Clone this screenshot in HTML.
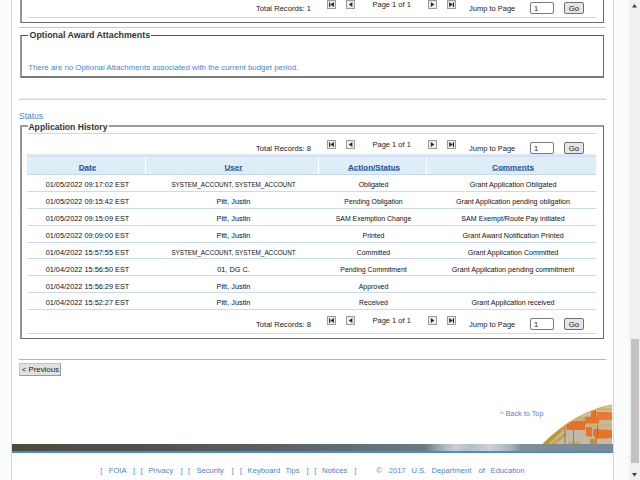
<!DOCTYPE html><html><head><meta charset="utf-8"><style>
html,body{margin:0;padding:0;}
body{width:640px;height:480px;overflow:hidden;position:relative;background:repeating-linear-gradient(-45deg, #ffffff 0px, #ffffff 1.6px, #f4f9f9 1.7px, #f4f9f9 2.83px);font-family:"Liberation Sans", sans-serif;}
.t{position:absolute;white-space:pre;}
.b{position:absolute;box-sizing:border-box;}
</style></head><body>
<div class="b" style="left:11px;top:0px;width:603px;height:480px;background:#fff;border-left:1px solid #c8dcf1;border-right:1px solid #c8dcf1;"></div>
<div class="b" style="left:629px;top:0px;width:11px;height:480px;background:#f0f0f0;"></div>
<div class="b" style="left:631px;top:339px;width:8px;height:124px;background:#c2c2c2;"></div>
<svg style="position:absolute;left:629px;top:0" width="11" height="480"><path d="M3 7.5 L5.5 4 L8 7.5Z" fill="#404040"/><path d="M3 473 L5.5 476.5 L8 473Z" fill="#404040"/></svg>
<div class="b" style="left:20px;top:-60px;width:584px;height:83px;border-left:2px solid #969696;border-right:1px solid #6a6a6a;border-bottom:1px solid #6a6a6a;"></div>
<div class="b" style="left:28px;top:17px;width:569px;height:1px;background:#c9dbf0;"></div>
<div class="t" style="left:256px;top:3.81px;font-size:7.6px;line-height:9.12px;color:#222;">Total Records: 1</div>
<svg style="position:absolute;left:327px;top:0px" width="9" height="9"><rect x="0.5" y="0.5" width="8" height="8" fill="#f6f6f6" stroke="#9c9c9c" stroke-width="1"/><rect x="1.5" y="1.5" width="6" height="6" fill="none" stroke="#e2e2e2" stroke-width="0.6"/><rect x="2.1" y="2.3" width="1.2" height="4.6" fill="#252a25"/><path d="M6.9 2.1 L3.3 4.6 L6.9 7.1Z" fill="#252a25"/></svg>
<svg style="position:absolute;left:346px;top:0px" width="9" height="9"><rect x="0.5" y="0.5" width="8" height="8" fill="#f6f6f6" stroke="#9c9c9c" stroke-width="1"/><rect x="1.5" y="1.5" width="6" height="6" fill="none" stroke="#e2e2e2" stroke-width="0.6"/><path d="M6.4 2.1 L2.8 4.6 L6.4 7.1Z" fill="#252a25"/></svg>
<svg style="position:absolute;left:428px;top:0px" width="9" height="9"><rect x="0.5" y="0.5" width="8" height="8" fill="#f6f6f6" stroke="#9c9c9c" stroke-width="1"/><rect x="1.5" y="1.5" width="6" height="6" fill="none" stroke="#e2e2e2" stroke-width="0.6"/><path d="M2.8 2.1 L6.4 4.6 L2.8 7.1Z" fill="#252a25"/></svg>
<svg style="position:absolute;left:447px;top:0px" width="9" height="9"><rect x="0.5" y="0.5" width="8" height="8" fill="#f6f6f6" stroke="#9c9c9c" stroke-width="1"/><rect x="1.5" y="1.5" width="6" height="6" fill="none" stroke="#e2e2e2" stroke-width="0.6"/><path d="M2.2 2.1 L5.8 4.6 L2.2 7.1Z" fill="#252a25"/><rect x="5.8" y="2.3" width="1.2" height="4.6" fill="#252a25"/></svg>
<div class="t" style="left:372.5px;top:0.30px;font-size:7.5px;line-height:9.0px;color:#222;">Page 1 of 1</div>
<div class="t" style="left:469px;top:3.70px;font-size:7.5px;line-height:9.0px;color:#222;">Jump to Page</div>
<div class="b" style="left:530px;top:2px;width:24px;height:12px;background:#fff;border:1px solid #7a7a7a;border-radius:2px;"></div>
<div class="t" style="left:534px;top:3.80px;font-size:7.5px;line-height:9.0px;color:#222;">1</div>
<div class="b" style="left:564px;top:2px;width:20px;height:12px;background:#e6e6e6;border:1px solid #6f6f6f;border-radius:2px;"></div>
<div class="t" style="left:564px;top:3.52px;font-size:7.8px;line-height:9.36px;color:#222;width:20px;text-align:center;">Go</div>
<div class="b" style="left:19px;top:27px;width:587px;height:1px;background:#abcdee;"></div>
<div class="b" style="left:20px;top:35px;width:584px;height:43px;border-left:2px solid #969696;border-top:1px solid #555;border-right:1px solid #6a6a6a;border-bottom:2px solid #7a7a7a;"></div>
<div class="b" style="left:28px;top:32px;width:123px;height:8px;background:#fff;"></div>
<div class="t" style="left:29.5px;top:29.52px;font-size:8.85px;line-height:10.62px;color:#333;font-weight:bold;">Optional Award Attachments</div>
<div class="t" style="left:28.2px;top:62.76px;font-size:7.86px;line-height:9.43px;color:#4a86cf;">There are no Optional Attachments associated with the current budget period.</div>
<div class="b" style="left:19px;top:98px;width:587px;height:1px;background:#e3edf7;"></div>
<div class="b" style="left:19px;top:99px;width:587px;height:1px;background:#c6d6ef;"></div>
<div class="t" style="left:19px;top:110.69px;font-size:8.46px;line-height:10.15px;color:#4a86cf;">Status</div>
<div class="b" style="left:20px;top:125px;width:584px;height:214px;border-left:2px solid #969696;border-top:2px solid #9a9a9a;border-right:1px solid #6a6a6a;border-bottom:1px solid #6a6a6a;"></div>
<div class="b" style="left:27.5px;top:122px;width:81.5px;height:8px;background:#fff;"></div>
<div class="t" style="left:28.4px;top:121.71px;font-size:8.65px;line-height:10.38px;color:#333;font-weight:bold;">Application History</div>
<div class="b" style="left:27px;top:133px;width:570px;height:1px;background:#c9dbf0;"></div>
<div class="t" style="left:256px;top:143.81px;font-size:7.6px;line-height:9.12px;color:#222;">Total Records: 8</div>
<svg style="position:absolute;left:327px;top:140px" width="9" height="9"><rect x="0.5" y="0.5" width="8" height="8" fill="#f6f6f6" stroke="#9c9c9c" stroke-width="1"/><rect x="1.5" y="1.5" width="6" height="6" fill="none" stroke="#e2e2e2" stroke-width="0.6"/><rect x="2.1" y="2.3" width="1.2" height="4.6" fill="#252a25"/><path d="M6.9 2.1 L3.3 4.6 L6.9 7.1Z" fill="#252a25"/></svg>
<svg style="position:absolute;left:346px;top:140px" width="9" height="9"><rect x="0.5" y="0.5" width="8" height="8" fill="#f6f6f6" stroke="#9c9c9c" stroke-width="1"/><rect x="1.5" y="1.5" width="6" height="6" fill="none" stroke="#e2e2e2" stroke-width="0.6"/><path d="M6.4 2.1 L2.8 4.6 L6.4 7.1Z" fill="#252a25"/></svg>
<svg style="position:absolute;left:428px;top:140px" width="9" height="9"><rect x="0.5" y="0.5" width="8" height="8" fill="#f6f6f6" stroke="#9c9c9c" stroke-width="1"/><rect x="1.5" y="1.5" width="6" height="6" fill="none" stroke="#e2e2e2" stroke-width="0.6"/><path d="M2.8 2.1 L6.4 4.6 L2.8 7.1Z" fill="#252a25"/></svg>
<svg style="position:absolute;left:447px;top:140px" width="9" height="9"><rect x="0.5" y="0.5" width="8" height="8" fill="#f6f6f6" stroke="#9c9c9c" stroke-width="1"/><rect x="1.5" y="1.5" width="6" height="6" fill="none" stroke="#e2e2e2" stroke-width="0.6"/><path d="M2.2 2.1 L5.8 4.6 L2.2 7.1Z" fill="#252a25"/><rect x="5.8" y="2.3" width="1.2" height="4.6" fill="#252a25"/></svg>
<div class="t" style="left:372.5px;top:140.30px;font-size:7.5px;line-height:9.0px;color:#222;">Page 1 of 1</div>
<div class="t" style="left:469px;top:143.70px;font-size:7.5px;line-height:9.0px;color:#222;">Jump to Page</div>
<div class="b" style="left:530px;top:142px;width:24px;height:12px;background:#fff;border:1px solid #7a7a7a;border-radius:2px;"></div>
<div class="t" style="left:534px;top:143.80px;font-size:7.5px;line-height:9.0px;color:#222;">1</div>
<div class="b" style="left:564px;top:142px;width:20px;height:12px;background:#e6e6e6;border:1px solid #6f6f6f;border-radius:2px;"></div>
<div class="t" style="left:564px;top:143.52px;font-size:7.8px;line-height:9.36px;color:#222;width:20px;text-align:center;">Go</div>
<div class="b" style="left:27px;top:154px;width:569px;height:21px;background:#dfedf7;border-top:2px solid #dbe7f6;border-bottom:1px solid #c6daef;"></div>
<div class="b" style="left:27px;top:156px;width:569px;height:1px;background:#d3dff4;"></div>
<div class="b" style="left:145px;top:157px;width:1px;height:17px;background:#fff;"></div>
<div class="b" style="left:318px;top:157px;width:1px;height:17px;background:#fff;"></div>
<div class="b" style="left:426px;top:157px;width:1px;height:17px;background:#fff;"></div>
<div class="t" style="left:27px;top:164.09px;font-size:7.3px;line-height:8.76px;color:#1e50a0;font-weight:bold;width:118px;text-align:center;padding-left:3px;box-sizing:border-box;text-decoration:underline;text-decoration-color:#7896cc;text-underline-offset:0.3px;transform:scaleX(1.11);transform-origin:60.5px 50%;">Date</div>
<div class="t" style="left:146px;top:164.09px;font-size:7.3px;line-height:8.76px;color:#1e50a0;font-weight:bold;width:172px;text-align:center;padding-left:3px;box-sizing:border-box;text-decoration:underline;text-decoration-color:#7896cc;text-underline-offset:0.3px;transform:scaleX(1.11);transform-origin:87.5px 50%;">User</div>
<div class="t" style="left:319px;top:164.09px;font-size:7.3px;line-height:8.76px;color:#1e50a0;font-weight:bold;width:107px;text-align:center;padding-left:3px;box-sizing:border-box;text-decoration:underline;text-decoration-color:#7896cc;text-underline-offset:0.3px;transform:scaleX(1.11);transform-origin:55.0px 50%;">Action/Status</div>
<div class="t" style="left:427px;top:164.09px;font-size:7.3px;line-height:8.76px;color:#1e50a0;font-weight:bold;width:169px;text-align:center;padding-left:3px;box-sizing:border-box;text-decoration:underline;text-decoration-color:#7896cc;text-underline-offset:0.3px;transform:scaleX(1.11);transform-origin:86.0px 50%;">Comments</div>
<div class="b" style="left:27px;top:191px;width:569px;height:1px;background:#c9dbf0;"></div>
<div class="t" style="left:27px;top:181.34px;font-size:7.35px;line-height:8.82px;color:#111;width:118px;text-align:center;padding-left:3px;box-sizing:border-box;transform:scaleX(1.0);transform-origin:60.5px 50%;">01/05/2022 09:17:02 EST</div>
<div class="t" style="left:146px;top:181.34px;font-size:7.35px;line-height:8.82px;color:#111;width:172px;text-align:center;padding-left:3px;box-sizing:border-box;transform:scaleX(0.86);transform-origin:87.5px 50%;">SYSTEM_ACCOUNT, SYSTEM_ACCOUNT</div>
<div class="t" style="left:319px;top:181.34px;font-size:7.35px;line-height:8.82px;color:#111;width:107px;text-align:center;padding-left:2px;box-sizing:border-box;transform:scaleX(0.94);transform-origin:54.5px 50%;">Obligated</div>
<div class="t" style="left:427px;top:181.34px;font-size:7.35px;line-height:8.82px;color:#111;width:169px;text-align:center;padding-left:3px;box-sizing:border-box;transform:scaleX(0.97);transform-origin:86.0px 50%;">Grant Application Obligated</div>
<div class="b" style="left:27px;top:208px;width:569px;height:1px;background:#c9dbf0;"></div>
<div class="t" style="left:27px;top:198.20px;font-size:7.35px;line-height:8.82px;color:#111;width:118px;text-align:center;padding-left:3px;box-sizing:border-box;transform:scaleX(1.0);transform-origin:60.5px 50%;">01/05/2022 09:15:42 EST</div>
<div class="t" style="left:146px;top:198.20px;font-size:7.35px;line-height:8.82px;color:#111;width:172px;text-align:center;padding-left:3px;box-sizing:border-box;transform:scaleX(1.0);transform-origin:87.5px 50%;">Pitt, Justin</div>
<div class="t" style="left:319px;top:198.20px;font-size:7.35px;line-height:8.82px;color:#111;width:107px;text-align:center;padding-left:2px;box-sizing:border-box;transform:scaleX(0.94);transform-origin:54.5px 50%;">Pending Obligation</div>
<div class="t" style="left:427px;top:198.20px;font-size:7.35px;line-height:8.82px;color:#111;width:169px;text-align:center;padding-left:3px;box-sizing:border-box;transform:scaleX(0.97);transform-origin:86.0px 50%;">Grant Application pending obligation</div>
<div class="b" style="left:27px;top:225px;width:569px;height:1px;background:#c9dbf0;"></div>
<div class="t" style="left:27px;top:215.06px;font-size:7.35px;line-height:8.82px;color:#111;width:118px;text-align:center;padding-left:3px;box-sizing:border-box;transform:scaleX(1.0);transform-origin:60.5px 50%;">01/05/2022 09:15:09 EST</div>
<div class="t" style="left:146px;top:215.06px;font-size:7.35px;line-height:8.82px;color:#111;width:172px;text-align:center;padding-left:3px;box-sizing:border-box;transform:scaleX(1.0);transform-origin:87.5px 50%;">Pitt, Justin</div>
<div class="t" style="left:319px;top:215.06px;font-size:7.35px;line-height:8.82px;color:#111;width:107px;text-align:center;padding-left:2px;box-sizing:border-box;transform:scaleX(0.94);transform-origin:54.5px 50%;">SAM Exemption Change</div>
<div class="t" style="left:427px;top:215.06px;font-size:7.35px;line-height:8.82px;color:#111;width:169px;text-align:center;padding-left:3px;box-sizing:border-box;transform:scaleX(0.97);transform-origin:86.0px 50%;">SAM Exempt/Route Pay initiated</div>
<div class="b" style="left:27px;top:242px;width:569px;height:1px;background:#c9dbf0;"></div>
<div class="t" style="left:27px;top:231.92px;font-size:7.35px;line-height:8.82px;color:#111;width:118px;text-align:center;padding-left:3px;box-sizing:border-box;transform:scaleX(1.0);transform-origin:60.5px 50%;">01/05/2022 09:09:00 EST</div>
<div class="t" style="left:146px;top:231.92px;font-size:7.35px;line-height:8.82px;color:#111;width:172px;text-align:center;padding-left:3px;box-sizing:border-box;transform:scaleX(1.0);transform-origin:87.5px 50%;">Pitt, Justin</div>
<div class="t" style="left:319px;top:231.92px;font-size:7.35px;line-height:8.82px;color:#111;width:107px;text-align:center;padding-left:2px;box-sizing:border-box;transform:scaleX(0.94);transform-origin:54.5px 50%;">Printed</div>
<div class="t" style="left:427px;top:231.92px;font-size:7.35px;line-height:8.82px;color:#111;width:169px;text-align:center;padding-left:3px;box-sizing:border-box;transform:scaleX(0.97);transform-origin:86.0px 50%;">Grant Award Notification Printed</div>
<div class="b" style="left:27px;top:258px;width:569px;height:1px;background:#c9dbf0;"></div>
<div class="t" style="left:27px;top:248.78px;font-size:7.35px;line-height:8.82px;color:#111;width:118px;text-align:center;padding-left:3px;box-sizing:border-box;transform:scaleX(1.0);transform-origin:60.5px 50%;">01/04/2022 15:57:55 EST</div>
<div class="t" style="left:146px;top:248.78px;font-size:7.35px;line-height:8.82px;color:#111;width:172px;text-align:center;padding-left:3px;box-sizing:border-box;transform:scaleX(0.86);transform-origin:87.5px 50%;">SYSTEM_ACCOUNT, SYSTEM_ACCOUNT</div>
<div class="t" style="left:319px;top:248.78px;font-size:7.35px;line-height:8.82px;color:#111;width:107px;text-align:center;padding-left:2px;box-sizing:border-box;transform:scaleX(0.94);transform-origin:54.5px 50%;">Committed</div>
<div class="t" style="left:427px;top:248.78px;font-size:7.35px;line-height:8.82px;color:#111;width:169px;text-align:center;padding-left:3px;box-sizing:border-box;transform:scaleX(0.97);transform-origin:86.0px 50%;">Grant Application Committed</div>
<div class="b" style="left:27px;top:275px;width:569px;height:1px;background:#c9dbf0;"></div>
<div class="t" style="left:27px;top:265.64px;font-size:7.35px;line-height:8.82px;color:#111;width:118px;text-align:center;padding-left:3px;box-sizing:border-box;transform:scaleX(1.0);transform-origin:60.5px 50%;">01/04/2022 15:56:50 EST</div>
<div class="t" style="left:146px;top:265.64px;font-size:7.35px;line-height:8.82px;color:#111;width:172px;text-align:center;padding-left:3px;box-sizing:border-box;transform:scaleX(1.0);transform-origin:87.5px 50%;">01, DG C.</div>
<div class="t" style="left:319px;top:265.64px;font-size:7.35px;line-height:8.82px;color:#111;width:107px;text-align:center;padding-left:2px;box-sizing:border-box;transform:scaleX(0.94);transform-origin:54.5px 50%;">Pending Commitment</div>
<div class="t" style="left:427px;top:265.64px;font-size:7.35px;line-height:8.82px;color:#111;width:169px;text-align:center;padding-left:3px;box-sizing:border-box;transform:scaleX(0.97);transform-origin:86.0px 50%;">Grant Application pending commitment</div>
<div class="b" style="left:27px;top:292px;width:569px;height:1px;background:#c9dbf0;"></div>
<div class="t" style="left:27px;top:282.50px;font-size:7.35px;line-height:8.82px;color:#111;width:118px;text-align:center;padding-left:3px;box-sizing:border-box;transform:scaleX(1.0);transform-origin:60.5px 50%;">01/04/2022 15:56:29 EST</div>
<div class="t" style="left:146px;top:282.50px;font-size:7.35px;line-height:8.82px;color:#111;width:172px;text-align:center;padding-left:3px;box-sizing:border-box;transform:scaleX(1.0);transform-origin:87.5px 50%;">Pitt, Justin</div>
<div class="t" style="left:319px;top:282.50px;font-size:7.35px;line-height:8.82px;color:#111;width:107px;text-align:center;padding-left:2px;box-sizing:border-box;transform:scaleX(0.94);transform-origin:54.5px 50%;">Approved</div>
<div class="t" style="left:427px;top:282.50px;font-size:7.35px;line-height:8.82px;color:#111;width:169px;text-align:center;padding-left:3px;box-sizing:border-box;transform:scaleX(0.97);transform-origin:86.0px 50%;"></div>
<div class="b" style="left:27px;top:309px;width:569px;height:1px;background:#c9dbf0;"></div>
<div class="t" style="left:27px;top:299.36px;font-size:7.35px;line-height:8.82px;color:#111;width:118px;text-align:center;padding-left:3px;box-sizing:border-box;transform:scaleX(1.0);transform-origin:60.5px 50%;">01/04/2022 15:52:27 EST</div>
<div class="t" style="left:146px;top:299.36px;font-size:7.35px;line-height:8.82px;color:#111;width:172px;text-align:center;padding-left:3px;box-sizing:border-box;transform:scaleX(1.0);transform-origin:87.5px 50%;">Pitt, Justin</div>
<div class="t" style="left:319px;top:299.36px;font-size:7.35px;line-height:8.82px;color:#111;width:107px;text-align:center;padding-left:2px;box-sizing:border-box;transform:scaleX(0.94);transform-origin:54.5px 50%;">Received</div>
<div class="t" style="left:427px;top:299.36px;font-size:7.35px;line-height:8.82px;color:#111;width:169px;text-align:center;padding-left:3px;box-sizing:border-box;transform:scaleX(0.97);transform-origin:86.0px 50%;">Grant Application received</div>
<div class="t" style="left:256px;top:319.81px;font-size:7.6px;line-height:9.12px;color:#222;">Total Records: 8</div>
<svg style="position:absolute;left:327px;top:316px" width="9" height="9"><rect x="0.5" y="0.5" width="8" height="8" fill="#f6f6f6" stroke="#9c9c9c" stroke-width="1"/><rect x="1.5" y="1.5" width="6" height="6" fill="none" stroke="#e2e2e2" stroke-width="0.6"/><rect x="2.1" y="2.3" width="1.2" height="4.6" fill="#252a25"/><path d="M6.9 2.1 L3.3 4.6 L6.9 7.1Z" fill="#252a25"/></svg>
<svg style="position:absolute;left:346px;top:316px" width="9" height="9"><rect x="0.5" y="0.5" width="8" height="8" fill="#f6f6f6" stroke="#9c9c9c" stroke-width="1"/><rect x="1.5" y="1.5" width="6" height="6" fill="none" stroke="#e2e2e2" stroke-width="0.6"/><path d="M6.4 2.1 L2.8 4.6 L6.4 7.1Z" fill="#252a25"/></svg>
<svg style="position:absolute;left:428px;top:316px" width="9" height="9"><rect x="0.5" y="0.5" width="8" height="8" fill="#f6f6f6" stroke="#9c9c9c" stroke-width="1"/><rect x="1.5" y="1.5" width="6" height="6" fill="none" stroke="#e2e2e2" stroke-width="0.6"/><path d="M2.8 2.1 L6.4 4.6 L2.8 7.1Z" fill="#252a25"/></svg>
<svg style="position:absolute;left:447px;top:316px" width="9" height="9"><rect x="0.5" y="0.5" width="8" height="8" fill="#f6f6f6" stroke="#9c9c9c" stroke-width="1"/><rect x="1.5" y="1.5" width="6" height="6" fill="none" stroke="#e2e2e2" stroke-width="0.6"/><path d="M2.2 2.1 L5.8 4.6 L2.2 7.1Z" fill="#252a25"/><rect x="5.8" y="2.3" width="1.2" height="4.6" fill="#252a25"/></svg>
<div class="t" style="left:372.5px;top:316.30px;font-size:7.5px;line-height:9.0px;color:#222;">Page 1 of 1</div>
<div class="t" style="left:469px;top:319.70px;font-size:7.5px;line-height:9.0px;color:#222;">Jump to Page</div>
<div class="b" style="left:530px;top:318px;width:24px;height:12px;background:#fff;border:1px solid #7a7a7a;border-radius:2px;"></div>
<div class="t" style="left:534px;top:319.80px;font-size:7.5px;line-height:9.0px;color:#222;">1</div>
<div class="b" style="left:564px;top:318px;width:20px;height:12px;background:#e6e6e6;border:1px solid #6f6f6f;border-radius:2px;"></div>
<div class="t" style="left:564px;top:319.52px;font-size:7.8px;line-height:9.36px;color:#222;width:20px;text-align:center;">Go</div>
<div class="b" style="left:27px;top:333px;width:570px;height:1px;background:#c9dbf0;"></div>
<div class="b" style="left:19px;top:359px;width:587px;height:1px;background:#9bbde5;"></div>
<div class="b" style="left:19px;top:363px;width:42px;height:13px;background:#e1e1e1;border:1px solid #c2c2c2;border-right-color:#9a9a9a;border-bottom-color:#9a9a9a;"></div>
<div class="t" style="left:21.7px;top:364.97px;font-size:7.85px;line-height:9.42px;color:#222;">&lt; Previous</div>
<div class="t" style="left:500px;top:410.29px;font-size:7.3px;line-height:8.76px;color:#4a86cf;">^ Back to Top</div>
<div class="b" style="left:12px;top:444px;width:601px;height:7px;background:linear-gradient(90deg,#4b4a3e 0%,#505250 23%,#5a6264 44.6%,#66727a 61.2%,#6e7a80 68.7%,#a0abb1 71.2%,#c8d0d4 73.7%,#b4bec4 76.2%,#c9d1d5 79.5%,#aab4ba 82.9%,#7f8d98 84.9%,#788896 100%);"></div>
<div class="b" style="left:12px;top:451px;width:601px;height:2px;background:#4a8ad6;"></div>
<svg style="position:absolute;left:540px;top:400px" width="73" height="44">
<defs><clipPath id="arc"><path d="M3 44 Q35 12 72 5 L72 44 Z"/></clipPath></defs>
<g clip-path="url(#arc)">
<rect x="0" y="0" width="73" height="44" fill="#c4b9a6"/>
<path d="M30 0 L72 0 L72 12 L56 11 L45 16 L36 17 L30 20Z" fill="#d2c7b3"/>
<path d="M4 44 L22 28 L26 27.5 L9 44Z" fill="#c49a35"/><path d="M3 44 L20 29 L22 28 L4.5 44Z" fill="#8a7040"/>
<path d="M11 44 L24 33 L27 35 L15 44Z" fill="#c9a23c"/>
<path d="M36 17 L46 16 L46 21 L36 21Z" fill="#c7b27a"/>
<path d="M25 22 L32 21 L45 21 L45 30 L27 30Z" fill="#e5702a"/>
<path d="M45 17 L59 16 L59 25 L45 25Z" fill="#e8742a"/>
<path d="M51 11 L56 11 L56 17 L51 17Z" fill="#e8742a"/>
<path d="M56 12 L72 12 L72 20 L58 20Z" fill="#ea7a30"/>
<path d="M58 8 L72 8 L72 11 L58 11Z" fill="#c9b47e"/>
<path d="M46 23.5 L72 23.5 L72 28 L46 28Z" fill="#cbb67a"/>
<path d="M46 27 L52 27 L52 37 L46 36Z" fill="#e8742a"/>
<path d="M53 29 L72 30 L72 38 L56 39 L53 35Z" fill="#e8742a"/>
<path d="M50 39 L57 39 L57 44 L50 44Z" fill="#b89040"/>
<path d="M28 41.5 L40 41.5 L40 44 L28 44Z" fill="#d0a850"/>
<rect x="24.5" y="23" width="0.9" height="21" fill="#7a766a"/>
<rect x="33" y="30" width="0.9" height="14" fill="#857f70"/>
<rect x="57" y="25" width="0.9" height="12" fill="#7a766a"/>
<rect x="55" y="10" width="0.9" height="6" fill="#7a766a"/>
</g>
<path d="M3 44 Q35 12 72 5" fill="none" stroke="#dfa63a" stroke-width="1.1"/>
</svg>
<div class="t" style="left:100.3px;top:466.31px;font-size:7.6px;line-height:9.12px;color:#4a86cf;">[</div>
<div class="t" style="left:108.8px;top:466.31px;font-size:7.6px;line-height:9.12px;color:#4a86cf;">FOIA</div>
<div class="t" style="left:132.8px;top:466.31px;font-size:7.6px;line-height:9.12px;color:#4a86cf;">]</div>
<div class="t" style="left:140.6px;top:466.31px;font-size:7.6px;line-height:9.12px;color:#4a86cf;">[</div>
<div class="t" style="left:148.5px;top:466.31px;font-size:7.6px;line-height:9.12px;color:#4a86cf;">Privacy</div>
<div class="t" style="left:180.4px;top:466.31px;font-size:7.6px;line-height:9.12px;color:#4a86cf;">]</div>
<div class="t" style="left:188px;top:466.31px;font-size:7.6px;line-height:9.12px;color:#4a86cf;">[</div>
<div class="t" style="left:196.4px;top:466.31px;font-size:7.6px;line-height:9.12px;color:#4a86cf;">Security</div>
<div class="t" style="left:231.6px;top:466.31px;font-size:7.6px;line-height:9.12px;color:#4a86cf;">]</div>
<div class="t" style="left:240px;top:466.31px;font-size:7.6px;line-height:9.12px;color:#4a86cf;">[</div>
<div class="t" style="left:247.6px;top:466.31px;font-size:7.6px;line-height:9.12px;color:#4a86cf;">Keyboard</div>
<div class="t" style="left:285.5px;top:466.31px;font-size:7.6px;line-height:9.12px;color:#4a86cf;">Tips</div>
<div class="t" style="left:306.6px;top:466.31px;font-size:7.6px;line-height:9.12px;color:#4a86cf;">]</div>
<div class="t" style="left:314.2px;top:466.31px;font-size:7.6px;line-height:9.12px;color:#4a86cf;">[</div>
<div class="t" style="left:322px;top:466.31px;font-size:7.6px;line-height:9.12px;color:#4a86cf;">Notices</div>
<div class="t" style="left:354.3px;top:466.31px;font-size:7.6px;line-height:9.12px;color:#4a86cf;">]</div>
<div class="t" style="left:376.3px;top:466.31px;font-size:7.6px;line-height:9.12px;color:#4a86cf;">&copy;</div>
<div class="t" style="left:388.7px;top:466.31px;font-size:7.6px;line-height:9.12px;color:#4a86cf;">2017</div>
<div class="t" style="left:411.4px;top:466.31px;font-size:7.6px;line-height:9.12px;color:#4a86cf;">U.S.</div>
<div class="t" style="left:431.6px;top:466.31px;font-size:7.6px;line-height:9.12px;color:#4a86cf;">Department</div>
<div class="t" style="left:478.5px;top:466.31px;font-size:7.6px;line-height:9.12px;color:#4a86cf;">of</div>
<div class="t" style="left:490.6px;top:466.31px;font-size:7.6px;line-height:9.12px;color:#4a86cf;">Education</div>
</body></html>
